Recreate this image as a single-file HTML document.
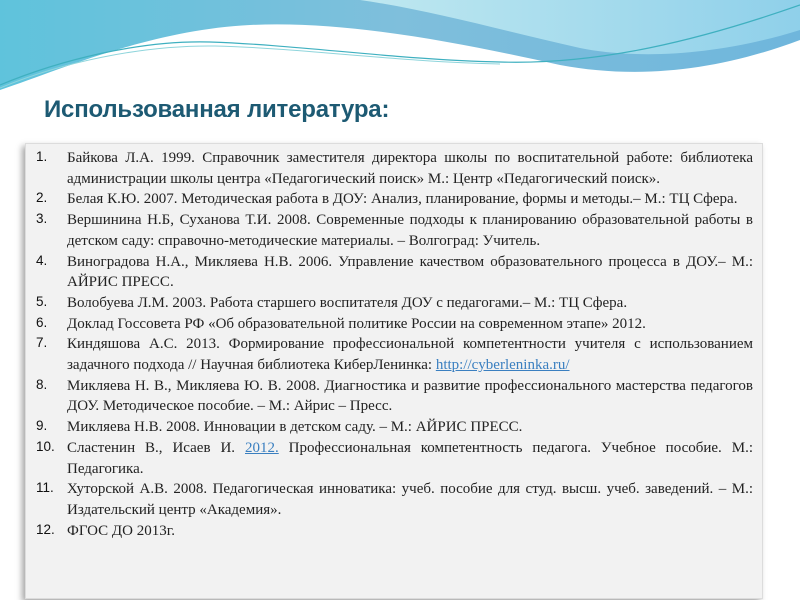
<!DOCTYPE html>
<html><head><meta charset="utf-8">
<style>
body{margin:0;width:800px;height:600px;overflow:hidden;background:#fff;position:relative;font-family:"Liberation Serif",serif}
h1{position:absolute;left:44px;top:96px;margin:0;font:bold 24px "Liberation Sans",sans-serif;color:#1d5a73;letter-spacing:-0.2px}
.box{position:absolute;left:25px;top:143px;width:736px;height:454px;background:#f2f2f2;border:1px solid #dcdcdc;box-shadow:-3px 3px 6px rgba(0,0,0,0.35)}
ol{margin:0;padding:0;list-style:none;position:absolute;left:0;top:4px;width:736px}
li{position:relative;padding-left:41px;padding-right:9px;font-size:15px;line-height:20.7px;text-align:justify;color:#222}
li span.n{position:absolute;left:10px;top:1px;font:13.5px "Liberation Sans",sans-serif;color:#111}
a{color:#3a7fc0;text-decoration:underline}
</style></head><body>
<svg width="800" height="140" style="position:absolute;left:0;top:0">
<defs>
<linearGradient id="g1" x1="0" y1="0" x2="1" y2="0"><stop offset="0" stop-color="#5fc3dc"/><stop offset="0.5" stop-color="#7fbfdc"/><stop offset="1" stop-color="#6fb6dc"/></linearGradient>
<linearGradient id="g2" x1="0" y1="0" x2="1" y2="0"><stop offset="0" stop-color="#bfe8f0"/><stop offset="1" stop-color="#8fd0ea"/></linearGradient>
</defs>
<path d="M0,0 L800,0 L800,40 C720,70 640,80 560,65 C470,45 350,20 250,25 C150,30 60,70 0,90 Z" fill="url(#g1)"/>
<path d="M360,0 L800,0 L800,30 C720,55 640,60 580,48 C500,30 430,10 360,0 Z" fill="url(#g2)"/>
<path d="M0,85 C60,60 140,40 210,42 C300,45 400,60 500,62 C600,65 700,40 800,5" stroke="#3fb0c0" stroke-width="1.2" fill="none"/>
<path d="M0,88 C60,63 140,45 215,46 C300,48 400,62 500,64" stroke="#8fd5dc" stroke-width="1" fill="none"/>
</svg>
<h1>Использованная литература:</h1>
<div class="box"><ol>
<li><span class="n">1.</span>Байкова Л.А. 1999. Справочник заместителя директора школы по воспитательной работе: библиотека администрации школы центра «Педагогический поиск» М.: Центр «Педагогический поиск».</li>
<li><span class="n">2.</span>Белая К.Ю. 2007. Методическая работа в ДОУ: Анализ, планирование, формы и методы.– М.: ТЦ Сфера.</li>
<li><span class="n">3.</span>Вершинина Н.Б, Суханова Т.И. 2008. Современные подходы к планированию образовательной работы в детском саду: справочно-методические материалы. – Волгоград: Учитель.</li>
<li><span class="n">4.</span>Виноградова Н.А., Микляева Н.В. 2006. Управление качеством образовательного процесса в ДОУ.– М.: АЙРИС ПРЕСС.</li>
<li><span class="n">5.</span>Волобуева Л.М. 2003. Работа старшего воспитателя ДОУ с педагогами.– М.: ТЦ Сфера.</li>
<li><span class="n">6.</span>Доклад Госсовета РФ «Об образовательной политике России на современном этапе» 2012.</li>
<li><span class="n">7.</span>Киндяшова А.С. 2013. Формирование профессиональной компетентности учителя с использованием задачного подхода // Научная библиотека КиберЛенинка: <a>http://cyberleninka.ru/</a></li>
<li><span class="n">8.</span>Микляева Н. В., Микляева Ю. В. 2008. Диагностика и развитие профессионального мастерства педагогов ДОУ. Методическое пособие. – М.: Айрис – Пресс.</li>
<li><span class="n">9.</span>Микляева Н.В. 2008. Инновации в детском саду. – М.: АЙРИС ПРЕСС.</li>
<li><span class="n">10.</span>Сластенин В., Исаев И. <a>2012.</a> Профессиональная компетентность педагога. Учебное пособие. М.: Педагогика.</li>
<li><span class="n">11.</span>Хуторской А.В. 2008. Педагогическая инноватика: учеб. пособие для студ. высш. учеб. заведений. – М.: Издательский центр «Академия».</li>
<li><span class="n">12.</span>ФГОС ДО 2013г.</li>
</ol></div>
</body></html>
